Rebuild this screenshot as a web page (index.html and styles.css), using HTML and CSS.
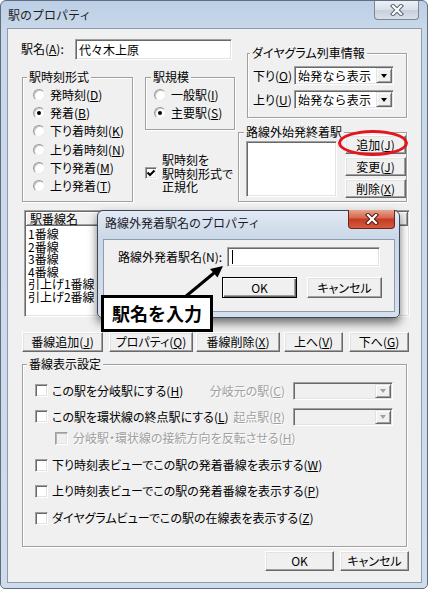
FILE: index.html
```html
<!DOCTYPE html>
<html>
<head>
    <title>駅のプロパティ</title>
    <link rel="stylesheet" href="styles.css">
</head>
<body>

<div class="window">
    <div class="titlebar">
        <span class="title">駅のプロパティ</span>
        <span class="close">
            <svg width="14" height="12" viewBox="0 0 14 12">
                <path d="M3 2 L11 10 M11 2 L3 10" stroke="#5b6472" stroke-width="4.2" stroke-linecap="square"/>
                <path d="M3 2 L11 10 M11 2 L3 10" stroke="#fff" stroke-width="2.2" stroke-linecap="square"/>
            </svg>
        </span>
    </div>

    <div class="client">
        <div class="top">
            <div class="col-left">
                <div class="name-row">
                    <span class="name-label">駅名(<u>A</u>):</span>
                    <div class="edit name-edit">代々木上原</div>
                </div>

                <div class="group-row">
                    <div class="group g-format">
                        <div class="group-title">駅時刻形式</div>
                        <ul class="radios">
                            <li><span class="radio"></span><span class="opt">発時刻(<u>D</u>)</span></li>
                            <li><span class="radio on"></span><span class="opt">発着(<u>B</u>)</span></li>
                            <li><span class="radio"></span><span class="opt">下り着時刻(<u>K</u>)</span></li>
                            <li><span class="radio"></span><span class="opt">上り着時刻(<u>N</u>)</span></li>
                            <li><span class="radio"></span><span class="opt">下り発着(<u>M</u>)</span></li>
                            <li><span class="radio"></span><span class="opt">上り発着(<u>T</u>)</span></li>
                        </ul>
                    </div>

                    <div class="sub-col">
                        <div class="group g-scale">
                            <div class="group-title">駅規模</div>
                            <ul class="radios">
                                <li><span class="radio"></span><span class="opt">一般駅(<u>I</u>)</span></li>
                                <li><span class="radio on"></span><span class="opt">主要駅(<u>S</u>)</span></li>
                            </ul>
                        </div>
                        <div class="check-multi">
                            <span class="check small on">
                                <svg width="10" height="10" viewBox="0 0 10 10"><path d="M1.5 4.5 L4 7 L8.5 2.5" fill="none" stroke="#000" stroke-width="2"/></svg>
                            </span>
                            <span class="multi-text">駅時刻を<br>駅時刻形式で<br>正規化</span>
                        </div>
                    </div>
                </div>
            </div>

            <div class="col-right">
                <div class="group g-dia">
                    <div class="group-title">ダイヤグラム列車情報</div>
                    <div class="dia-row first">
                        <span class="dia-label">下り(<u>O</u>)</span>
                        <div class="combo"><span class="combo-text">始発なら表示</span><span class="drop"><i></i></span></div>
                    </div>
                    <div class="dia-row">
                        <span class="dia-label">上り(<u>U</u>)</span>
                        <div class="combo"><span class="combo-text">始発なら表示</span><span class="drop"><i></i></span></div>
                    </div>
                </div>

                <div class="group g-route">
                    <div class="group-title">路線外始発終着駅</div>
                    <div class="route-body">
                        <div class="listbox"></div>
                        <div class="route-btns">
                            <div class="btn">追加(<u>J</u>)</div>
                            <div class="btn">変更(<u>J</u>)</div>
                            <div class="btn">削除(<u>X</u>)</div>
                        </div>
                    </div>
                </div>
            </div>
        </div>

        <div class="listview">
            <div class="lv-head">
                <div class="lv-col">駅番線名</div>
                <div class="lv-rest"></div>
            </div>
            <ul class="lv-rows">
                <li>1番線</li>
                <li>2番線</li>
                <li>3番線</li>
                <li>4番線</li>
                <li>引上げ1番線</li>
                <li>引上げ2番線</li>
            </ul>
        </div>

        <div class="btn-row">
            <div class="btn b-add">番線追加(<u>J</u>)</div>
            <div class="btn b-prop">プロパティ(<u>Q</u>)</div>
            <div class="btn b-del">番線削除(<u>X</u>)</div>
            <div class="btn b-up">上へ(<u>V</u>)</div>
            <div class="btn b-down">下へ(<u>G</u>)</div>
        </div>

        <div class="group g-track">
            <div class="group-title">番線表示設定</div>

            <div class="track-row r1">
                <span class="check"></span>
                <span class="opt">この駅を分岐駅にする(<u>H</u>)</span>
                <div class="track-right">
                    <span class="disabled">分岐元の駅(<u>C</u>)</span>
                    <div class="combo off"><span class="drop"><i></i></span></div>
                </div>
            </div>

            <div class="track-row r2">
                <span class="check"></span>
                <span class="opt">この駅を環状線の終点駅にする(<u>L</u>)</span>
                <div class="track-right">
                    <span class="disabled">起点駅(<u>R</u>)</span>
                    <div class="combo off"><span class="drop"><i></i></span></div>
                </div>
            </div>

            <div class="track-row r3">
                <span class="check off"></span>
                <span class="opt disabled">分岐駅・環状線の接続方向を反転させる(<u>H</u>)</span>
            </div>

            <div class="track-row r4">
                <span class="check"></span>
                <span class="opt">下り時刻表ビューでこの駅の発着番線を表示する(<u>W</u>)</span>
            </div>

            <div class="track-row r5">
                <span class="check"></span>
                <span class="opt">上り時刻表ビューでこの駅の発着番線を表示する(<u>P</u>)</span>
            </div>

            <div class="track-row r6">
                <span class="check"></span>
                <span class="opt">ダイヤグラムビューでこの駅の在線表を表示する(<u>Z</u>)</span>
            </div>
        </div>

        <div class="footer">
            <div class="btn">OK</div>
            <div class="btn">キャンセル</div>
        </div>
    </div>
</div>

<!-- the small dialog that is open on top -->
<div class="dialog">
    <div class="dlg-titlebar">
        <span class="dlg-title">路線外発着駅名のプロパティ</span>
        <span class="dlg-close">
            <svg width="14" height="12" viewBox="0 0 14 12">
                <path d="M3 2 L11 10 M11 2 L3 10" stroke="#4a1a12" stroke-width="4.2" stroke-linecap="square"/>
                <path d="M3 2 L11 10 M11 2 L3 10" stroke="#fff" stroke-width="2.2" stroke-linecap="square"/>
            </svg>
        </span>
    </div>
    <div class="dlg-client">
        <div class="dlg-row">
            <span class="dlg-label">路線外発着駅名(N):</span>
            <div class="edit dlg-edit"><span class="caret"></span></div>
        </div>
        <div class="dlg-buttons">
            <div class="btn default">OK</div>
            <div class="btn">キャンセル</div>
        </div>
    </div>
</div>

<div class="callout">駅名を入力</div>

<svg class="arrow" width="60" height="50" viewBox="0 0 60 50">
    <line x1="10" y1="42" x2="39" y2="18" stroke="#000" stroke-width="3"/>
    <polygon points="48,11 42.5,22.5 35,14" fill="#000"/>
</svg>

<div class="ring"></div>

</body>
</html>
```

FILE: styles.css
```css
body {
    margin: 0;
    background: #fff;
    font-family: "Noto Sans CJK JP", "Noto Sans", sans-serif;
    font-size: 12px;
    line-height: 14px;
    color: #000;
    font-feature-settings: "palt";
}

ul { list-style: none; margin: 0; padding: 0; }
u { text-underline-offset: 1px; }

/*---------Main window frame-------------*/
.window {
    width: 428px;
    height: 589px;
    box-sizing: border-box;
    border: 1px solid #5f6d80;
    border-radius: 6px 6px 5px 5px;
    background: linear-gradient(#bccfe6, #c9d8ea 28px, #cfdcec);
    padding: 0 5px 5px 6px;
}

.titlebar {
    height: 27px;
    display: flex;
    justify-content: space-between;
    align-items: flex-start;
}
.title {
    padding: 7px 0 0 1px;
    color: #1e1e1e;
    font-feature-settings: normal;
}
.close {
    width: 45px;
    height: 19px;
    margin-right: 3px;
    box-sizing: border-box;
    border: 1px solid #7d8796;
    border-top: none;
    border-radius: 0 0 4px 4px;
    background: linear-gradient(#eef2f6, #d8dfe8 50%, #c6cfdb 50%, #d9e0e9);
    display: flex;
    align-items: center;
    justify-content: center;
}

.client {
    height: 555px;
    box-sizing: border-box;
    border: 1px solid #8e9cae;
    background: #f0f0f0;
    padding: 0 12px 0 14px;
}

/*---------Common controls-------------*/
.group {
    box-sizing: border-box;
    border: 1px solid #a0a0a0;
    box-shadow: inset 1px 1px 0 #fff, 1px 1px 0 #fff;
}
.group-title {
    display: table;
    margin: -8px 0 0 4px;
    padding: 0 2px;
    background: #f0f0f0;
    line-height: 14px;
}

.edit {
    box-sizing: border-box;
    background: #fff;
    border: 1px solid;
    border-color: #a0a0a0 #fff #fff #a0a0a0;
    box-shadow: inset 1px 1px 0 #696969, inset -1px -1px 0 #e3e3e3;
}

.btn {
    box-sizing: border-box;
    background: #f0f0f0;
    border: 1px solid;
    border-color: #fff #696969 #696969 #fff;
    box-shadow: inset -1px -1px 0 #a0a0a0, inset 1px 1px 0 #e3e3e3;
    text-align: center;
    display: flex;
    align-items: center;
    justify-content: center;
}
.btn.default {
    border-color: #000;
    box-shadow: inset 1px 1px 0 #fff, inset -1px -1px 0 #696969, inset -2px -2px 0 #a0a0a0;
}

.radio {
    width: 12px;
    height: 12px;
    box-sizing: border-box;
    border-radius: 50%;
    background: #fff;
    border: 1px solid;
    border-color: #9a9a9a #ececec #ececec #9a9a9a;
    box-shadow: inset 1px 1px 0 #c6c6c6;
    display: flex;
    align-items: center;
    justify-content: center;
    flex-shrink: 0;
}
.radio.on::after {
    content: "";
    width: 4px;
    height: 4px;
    border-radius: 50%;
    background: #000;
}

.check {
    width: 13px;
    height: 13px;
    box-sizing: border-box;
    background: #fff;
    border: 1px solid;
    border-color: #a0a0a0 #fff #fff #a0a0a0;
    box-shadow: inset 1px 1px 0 #696969, inset -1px -1px 0 #e3e3e3;
    flex-shrink: 0;
    display: flex;
    align-items: center;
    justify-content: center;
}
.check.small { width: 12px; height: 12px; }
.check.off {
    background: #f0f0f0;
    box-shadow: inset 1px 1px 0 #b4b4b4, inset -1px -1px 0 #e3e3e3;
}

.disabled {
    color: #a0a0a0;
    text-shadow: 1px 1px 0 #fff;
}

.combo {
    box-sizing: border-box;
    width: 100px;
    height: 19px;
    background: #fff;
    border: 1px solid;
    border-color: #a0a0a0 #fff #fff #a0a0a0;
    box-shadow: inset 1px 1px 0 #696969, inset -1px -1px 0 #e3e3e3;
    padding: 1px;
    display: flex;
    justify-content: space-between;
}
.combo-text {
    font-size: 12px;
    letter-spacing: 0.2px;
    line-height: 15px;
    padding-left: 2px;
    white-space: nowrap;
    font-feature-settings: normal;
}
.drop {
    width: 16px;
    margin-left: auto;
    box-sizing: border-box;
    background: #f0f0f0;
    border: 1px solid;
    border-color: #e3e3e3 #696969 #696969 #e3e3e3;
    box-shadow: inset 1px 1px 0 #fff, inset -1px -1px 0 #a0a0a0;
    display: flex;
    align-items: center;
    justify-content: center;
    flex-shrink: 0;
}
.drop i {
    width: 0;
    height: 0;
    border-left: 3.5px solid transparent;
    border-right: 3.5px solid transparent;
    border-top: 4px solid #000;
}
.combo.off { height: 18px; background: #f0f0f0; }
.combo.off .drop i { border-top-color: #a0a0a0; }

/*---------Top part-------------*/
.top {
    display: flex;
    height: 173px;
}
.col-left { width: 216px; }
.col-right { width: 170px; }

.name-row {
    display: flex;
    margin-top: 10px;
    height: 21px;
}
.name-label {
    width: 54px;
    margin-left: -1px;
    line-height: 19px;
}
.name-edit {
    width: 157px;
    height: 21px;
    padding-left: 3px;
    line-height: 19px;
    font-feature-settings: normal;
}

.group-row {
    display: flex;
    margin-top: 17px;
}

.radios { margin-top: 2px; }
.radios li {
    height: 18.2px;
    display: flex;
    align-items: center;
}
.opt { margin-left: 5px; white-space: nowrap; }

.g-format { width: 111px; height: 125px; }
.g-format .radios li { padding-left: 10px; }

.sub-col { width: 90px; margin-left: 12px; }
.g-scale { width: 90px; height: 53px; }
.g-scale .group-title { margin-left: 5px; }
.g-scale .radios li { padding-left: 8px; }

.check-multi {
    margin-top: 23px;
    display: flex;
    align-items: center;
}
.multi-text {
    margin-left: 5px;
    line-height: 13.5px;
    white-space: nowrap;
}

.g-dia {
    width: 160px;
    height: 65px;
    margin: 24px 0 0 9px;
}
.g-dia .group-title { margin-left: 2px; }
.dia-row {
    display: flex;
    align-items: center;
    height: 19px;
    padding-left: 5px;
    margin-top: 5px;
}
.dia-row.first { margin-top: 6px; }
.dia-label { width: 41px; }

.g-route {
    width: 169px;
    height: 70px;
    margin-top: 14px;
}
.g-route .group-title { margin-left: 5px; }
.route-body { display: flex; }
.listbox {
    width: 91px;
    height: 56px;
    margin: 2px 0 0 7px;
    box-sizing: border-box;
    background: #fff;
    border: 1px solid;
    border-color: #a0a0a0 #fff #fff #a0a0a0;
    box-shadow: inset 1px 1px 0 #696969, inset -1px -1px 0 #e3e3e3;
}
.route-btns {
    width: 61px;
    margin: -4px 0 0 8px;
    display: flex;
    flex-direction: column;
    gap: 3px;
}
.route-btns .btn { height: 19px; }

/*---------Track list-------------*/
.listview {
    width: 386px;
    height: 107px;
    margin: 8px 0 0 2px;
    box-sizing: border-box;
    background: #fff;
    border: 1px solid;
    border-color: #a0a0a0 #fff #fff #a0a0a0;
    box-shadow: inset 1px 1px 0 #696969, inset -1px -1px 0 #e3e3e3;
    padding: 1px;
}
.lv-head {
    display: flex;
    height: 14px;
}
.lv-col, .lv-rest {
    box-sizing: border-box;
    background: #f0f0f0;
    border-right: 1px solid #696969;
    border-bottom: 1px solid #696969;
    box-shadow: inset 1px 1px 0 #fff, inset -1px -1px 0 #a0a0a0;
    line-height: 13px;
}
.lv-col { width: 170px; padding-left: 4px; }
.lv-rest { flex: 1; }
.lv-rows { padding: 2px 0 0 2px; }
.lv-rows li { line-height: 12.6px; }

.btn-row {
    display: flex;
    margin-top: 15px;
    height: 20px;
}
.b-add { width: 81px; }
.b-prop { width: 84px; margin-left: 6px; }
.b-del { width: 84px; margin-left: 3px; }
.b-up { width: 59px; margin-left: 4px; }
.b-down { width: 60px; margin-left: 6px; }

.g-track {
    width: 385px;
    height: 183px;
    margin-top: 12px;
}
.track-row {
    display: flex;
    align-items: center;
    height: 18px;
    padding: 0 13px 0 12px;
}
.track-row .opt { margin-left: 4px; }
.r1 { margin-top: 10px; height: 19px; }
.r2 { margin-top: 7px; height: 19px; }
.r3 { margin-top: 3px; padding-left: 32px; }
.r3 .opt { margin-left: 5px; }
.r4 { margin-top: 9px; }
.r5 { margin-top: 8px; }
.r6 { margin-top: 9px; }
.track-right {
    margin-left: auto;
    display: flex;
    align-items: center;
}
.track-right .combo { margin-left: 8px; }

.footer {
    display: flex;
    justify-content: flex-end;
    gap: 6px;
    margin-top: 4px;
}
.footer .btn { width: 69px; height: 20px; }

/*---------Overlay dialog-------------*/
.dialog {
    position: absolute;
    left: 97px;
    top: 210px;
    width: 303px;
    height: 108px;
    box-sizing: border-box;
    border: 1px solid #3c4658;
    border-radius: 6px 6px 5px 5px;
    background: linear-gradient(#e2eaf4, #cbd8e8 26px, #d5e0ed);
    padding: 0 4px 5px 5px;
    box-shadow: 0 5px 10px rgba(0, 0, 0, 0.55);
}
.dlg-titlebar {
    height: 28px;
    display: flex;
    justify-content: space-between;
    align-items: flex-start;
}
.dlg-title {
    padding: 5px 0 0 2px;
    color: #1a1a2a;
    font-feature-settings: normal;
}
.dlg-close {
    width: 47px;
    height: 19px;
    margin-top: -1px;
    box-sizing: border-box;
    border: 1px solid #6b2418;
    border-top: none;
    border-radius: 0 0 4px 4px;
    background: linear-gradient(#e8a38f, #d3664c 45%, #c33a22 50%, #d65a3e);
    display: flex;
    align-items: center;
    justify-content: center;
}
.dlg-client {
    height: 73px;
    box-sizing: border-box;
    border: 1px solid #8e9cae;
    background: #f0f0f0;
}
.dlg-row {
    display: flex;
    align-items: center;
    height: 20px;
    margin-top: 7px;
    padding: 0 14px;
}
.dlg-edit {
    width: 153px;
    height: 20px;
    margin-left: auto;
    padding-left: 4px;
    display: flex;
    align-items: center;
}
.caret {
    width: 1px;
    height: 14px;
    background: #000;
}
.dlg-buttons {
    display: flex;
    justify-content: flex-end;
    gap: 10px;
    margin-top: 10px;
    padding-right: 12px;
}
.dlg-buttons .btn { width: 75px; height: 21px; }

/*---------Annotations-------------*/
.callout {
    position: absolute;
    left: 101px;
    top: 295px;
    width: 112px;
    height: 37px;
    box-sizing: border-box;
    border: 3px solid #000;
    background: #fff;
    font-size: 18px;
    font-weight: bold;
    line-height: 31px;
    text-align: center;
    font-feature-settings: normal;
}
.arrow {
    position: absolute;
    left: 175px;
    top: 255px;
}
.ring {
    position: absolute;
    left: 338px;
    top: 130px;
    width: 70px;
    height: 26px;
    box-sizing: border-box;
    border: 3px solid #e4141c;
    border-radius: 50%;
}
```
